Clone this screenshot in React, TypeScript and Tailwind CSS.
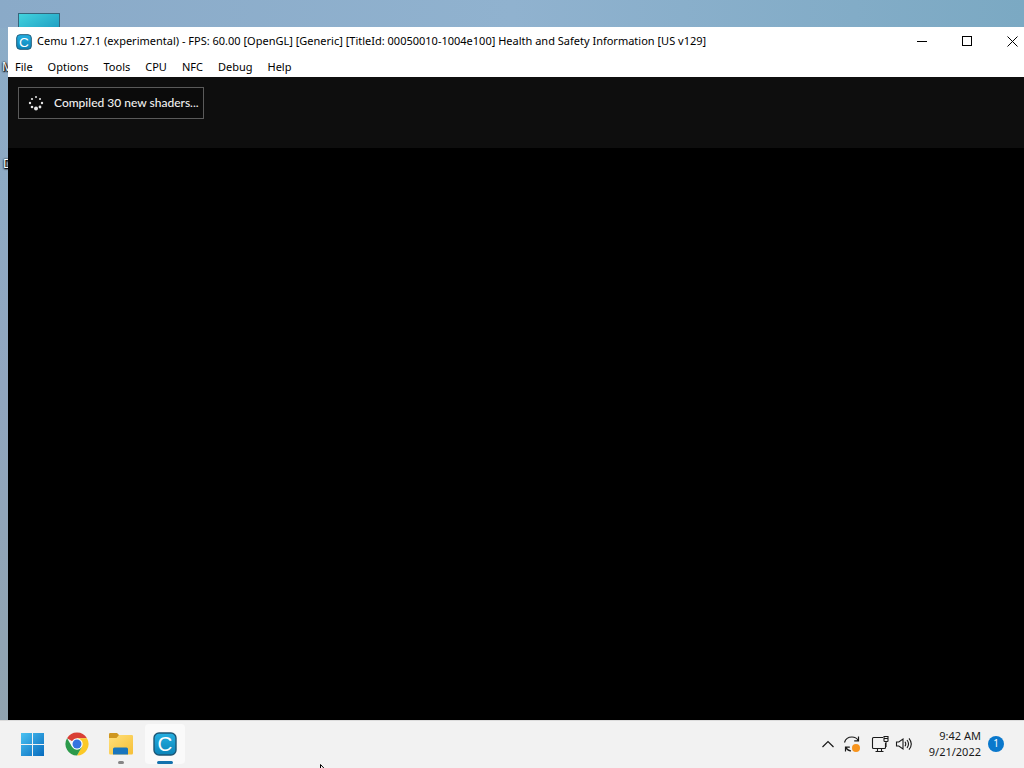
import { useState } from 'react'

const menus = ['File', 'Options', 'Tools', 'CPU', 'NFC', 'Debug', 'Help']

// clockwise from the top, the bottom dot is the leading one
const spinnerDots = [
  { x: 8, y: 2, r: 1 },
  { x: 12, y: 4, r: 1 },
  { x: 14, y: 8, r: 1.2 },
  { x: 12, y: 12, r: 1.4 },
  { x: 8, y: 13.5, r: 2 },
  { x: 4, y: 12, r: 1.3 },
  { x: 2, y: 8, r: 1.2 },
  { x: 4, y: 4, r: 1.1 },
]

function CemuLogo({ className }: { className: string }) {
  return (
    <svg viewBox="0 0 24 24" className={className} aria-hidden="true">
      <defs>
        <linearGradient id="cemu" x1="0" y1="0" x2="0" y2="1">
          <stop offset="0" stopColor="#25b0e2" />
          <stop offset="1" stopColor="#0c84b8" />
        </linearGradient>
      </defs>
      <rect x="1" y="1" width="22" height="22" rx="5" fill="url(#cemu)" stroke="#1c5675" strokeWidth="1.4" />
      <text
        x="12"
        y="19"
        textAnchor="middle"
        fontFamily="Liberation Sans, sans-serif"
        fontSize="20.5"
        fill="#fff"
      >
        C
      </text>
    </svg>
  )
}

function WindowsLogo() {
  return (
    <svg viewBox="0 0 24 24" className="size-6" aria-hidden="true">
      <defs>
        <linearGradient id="win" gradientUnits="userSpaceOnUse" x1="0" y1="0" x2="24" y2="24">
          <stop offset="0" stopColor="#4cc4f3" />
          <stop offset="1" stopColor="#0669bd" />
        </linearGradient>
      </defs>
      <path d="M0 1h11v11H0zM12 1h11v11H12zM0 13h11v11H0zM12 13h11v11H12z" fill="url(#win)" />
    </svg>
  )
}

function ChromeLogo() {
  return (
    <svg viewBox="0 0 24 24" className="size-6" aria-hidden="true">
      <path d="M12 12 2.04 6.25A11.5 11.5 0 0 1 21.96 6.25H12z" fill="#d93f35" />
      <path d="M21.96 6.25A11.5 11.5 0 0 1 12 23.5L16.98 14.87 12 6.25z" fill="#fbc926" />
      <path d="M12 23.5A11.5 11.5 0 0 1 2.04 6.25L7.02 14.87 16.98 14.87z" fill="#2c9a4b" />
      <circle cx="12" cy="12" r="5.7" fill="#fff" />
      <circle cx="12" cy="12" r="4.5" fill="#3573e0" />
    </svg>
  )
}

function FolderLogo() {
  return (
    <svg viewBox="0 0 24 24" className="size-6" aria-hidden="true">
      <defs>
        <linearGradient id="folder" x1="0" y1="0" x2="1" y2="1">
          <stop offset="0" stopColor="#ffe07b" />
          <stop offset="1" stopColor="#f6bf36" />
        </linearGradient>
      </defs>
      <path d="M0 2.2Q0 1 1.2 1H8l2 2v4H0z" fill="#cf9720" />
      <path d="M0 6h7.5L10 3h12.8Q24 3 24 4.2V21Q24 22.500 22.800 22.500H1.200Q0 22.500 0 21z" fill="url(#folder)" />
      <path d="M4 22.500V17q0-1.500 1.500-1.500h12q1.500 0 1.500 1.500v5.500z" fill="#1a76bd" />
    </svg>
  )
}

function TitleBar() {
  return (
    <header className="flex h-[29px] items-center pl-2">
      <CemuLogo className="size-4 shrink-0" />
      <h1 className="ml-[5px] flex-1 truncate text-[11px]">
        Cemu 1.27.1 (experimental) - FPS: 60.00 [OpenGL] [Generic] [TitleId: 00050010-1004e100] Health and Safety Information [US v129]
      </h1>
      <div className="-mr-[11px] flex shrink-0">
        <button type="button" aria-label="Minimize" className="flex h-7 w-[45px] items-center justify-center hover:bg-gray-200">
          <svg viewBox="0 0 11 11" className="size-[11px]" fill="none" stroke="#000">
            <path d="M0 5.500h10" />
          </svg>
        </button>
        <button type="button" aria-label="Maximize" className="flex h-7 w-[45px] items-center justify-center hover:bg-gray-200">
          <svg viewBox="0 0 11 11" className="size-[11px]" fill="none" stroke="#000">
            <rect x="0.5" y="0.5" width="9" height="9" />
          </svg>
        </button>
        <button type="button" aria-label="Close" className="flex h-7 w-[45px] items-center justify-center hover:bg-red-600">
          <svg viewBox="0 0 11 11" className="size-[11px]" fill="none" stroke="#000">
            <path d="m.5.5 10 10m0-10-10 10" />
          </svg>
        </button>
      </div>
    </header>
  )
}

function Toast() {
  return (
    <div role="status" className="flex h-8 w-fit items-center gap-2.5 border border-[#5a5a5a] bg-[#0b0b0b] pr-1 pl-[9px]">
      <svg viewBox="0 0 16 16" className="size-4" fill="#e6e6e6" aria-hidden="true">
        {spinnerDots.map((dot) => (
          <circle key={`${dot.x}-${dot.y}`} cx={dot.x} cy={dot.y} r={dot.r} />
        ))}
      </svg>
      <span className="font-[Lato,sans-serif] text-[12px] font-medium text-[#f0f0f0]">Compiled 30 new shaders...</span>
    </div>
  )
}

function Taskbar() {
  const [active, setActive] = useState('cemu')

  return (
    <footer className="relative flex h-12 items-center justify-between border-t border-[#dcdcdc] bg-[#f2f2f2] pr-5 pb-0.5 pl-[13px]">
      <nav className="flex gap-1">
        <button type="button" aria-label="Start" className="flex size-10 items-center justify-center rounded">
          <WindowsLogo />
        </button>
        <button type="button" aria-label="Google Chrome" className="flex size-10 items-center justify-center rounded">
          <ChromeLogo />
        </button>
        <button
          type="button"
          aria-label="File Explorer"
          onClick={() => setActive('files')}
          className={`relative flex size-10 items-center justify-center rounded ${active === 'files' ? 'bg-[#fafafa]' : ''}`}
        >
          <FolderLogo />
          <span className="absolute bottom-0 h-[3px] w-1.5 rounded-full bg-[#858585]" />
        </button>
        <button
          type="button"
          aria-label="Cemu"
          onClick={() => setActive('cemu')}
          className={`relative flex size-10 items-center justify-center rounded ${active === 'cemu' ? 'bg-[#fafafa]' : ''}`}
        >
          <CemuLogo className="size-6" />
          <span className="absolute bottom-0 h-[3px] w-4 rounded-full bg-[#1272ad]" />
        </button>
      </nav>

      <div className="flex items-center">
        <button type="button" aria-label="Show hidden icons" className="flex w-6 justify-center">
          <svg viewBox="0 0 12 8" className="h-2 w-3" fill="none" stroke="#1a1a1a" strokeWidth="1.2">
            <path d="m.5 7 5.500-5.500L11.500 7" />
          </svg>
        </button>
        <button type="button" aria-label="Windows Update" className="flex w-6 justify-center">
          <svg viewBox="0 0 18 18" className="size-[18px]" fill="none" stroke="#1a1a1a" strokeWidth="1.2">
            <path d="M1.500 7.500C2.500 4 5.500 2 9 2c2.700 0 5 1.300 6.300 3.500M15.500 1.500v4.300h-4.300" />
            <path d="M8 16c-2.500-.3-4.200-1.600-5.300-3.600M2.500 16.500v-4.300h4.300" />
            <circle cx="13" cy="13" r="4" fill="#f7941d" stroke="none" />
          </svg>
        </button>
        <button type="button" aria-label="Network" className="ml-1 flex w-6 justify-center">
          <svg viewBox="0 0 18 18" className="size-[18px]" fill="none" stroke="#1a1a1a" strokeWidth="1.1">
            <path d="M12 2.500H2.500q-1 0-1 1v9q0 1 1 1h11q1 0 1-1V8M6.500 13.500v3M10.500 13.500v3M4.500 16.500h8" />
            <path d="M13 1.500h4v4.300q0 .7-.7.7h-2.600q-.7 0-.7-.7zM13 3.500h4M15 6.500V12" />
          </svg>
        </button>
        <button type="button" aria-label="Volume" className="flex w-6 justify-center">
          <svg viewBox="0 0 18 18" className="size-[18px]" fill="none" stroke="#1a1a1a" strokeWidth="1.1">
            <path d="M1.500 7v4h2.300L8 14V4L3.800 7z" />
            <path d="M10 6.800q1.500 2.200 0 4.400M12 5q3 4 0 8M14 3.300q4.600 5.700 0 11.400" />
          </svg>
        </button>
        <div className="ml-2.5 w-[55px] text-right text-[11px] leading-4 whitespace-nowrap text-[#1a1a1a]">
          <div>9:42 AM</div>
          <div>9/21/2022</div>
        </div>
        <button
          type="button"
          aria-label="1 notification"
          className="ml-[7px] flex size-4 items-center justify-center rounded-full bg-[#0a78cc] text-[10px] text-white"
        >
          1
        </button>
      </div>

      {/* mouse pointer */}
      <svg viewBox="0 0 12 18" className="absolute top-[43px] left-80 h-[18px] w-3" aria-hidden="true">
        <path d="M.5.5v15l3.500-3.300 2.300 5 2-1-2.200-4.700h4.700z" fill="#fff" stroke="#000" />
      </svg>
    </footer>
  )
}

export default function App() {
  return (
    <div className="relative flex min-h-screen flex-col overflow-hidden bg-linear-to-b from-[#8badc8] via-[#91a6bf] to-[#91a3ad] font-['Noto_Sans','Open_Sans',sans-serif] text-black">
      <div className="absolute inset-x-0 top-0 h-7 bg-linear-to-r from-[#8aaac8] via-[#90b2cf] to-[#7ba9c3]" />

      {/* desktop shortcuts, mostly covered by the window */}
      <div className="absolute top-[13px] left-[18px] h-6 w-[42px] border border-[#35657c] bg-linear-to-br from-[#42d3de] to-[#1794bd]" />
      <span className="absolute top-[58px] left-0.5 text-[12px] text-white [text-shadow:0_1px_2px_#000,0_0_2px_#000,1px_1px_1px_#000]">M</span>
      <span className="absolute top-[155px] left-[3px] text-[12px] text-white [text-shadow:0_1px_2px_#000,0_0_2px_#000,1px_1px_1px_#000]">D</span>

      <main className="relative mt-[27px] ml-2 flex flex-1 flex-col overflow-hidden bg-white">
        <TitleBar />
        <nav className="flex h-[21px] items-center gap-[15px] pt-0.5 pl-[7px] text-[11px]">
          {menus.map((menu) => (
            <button key={menu} type="button" className="hover:bg-sky-100">
              {menu}
            </button>
          ))}
        </nav>
        <section className="flex flex-1 flex-col bg-black">
          <div className="h-[71px] bg-[#0e0e0e] px-2.5 pt-2.5">
            <Toast />
          </div>
        </section>
      </main>

      <Taskbar />
    </div>
  )
}
